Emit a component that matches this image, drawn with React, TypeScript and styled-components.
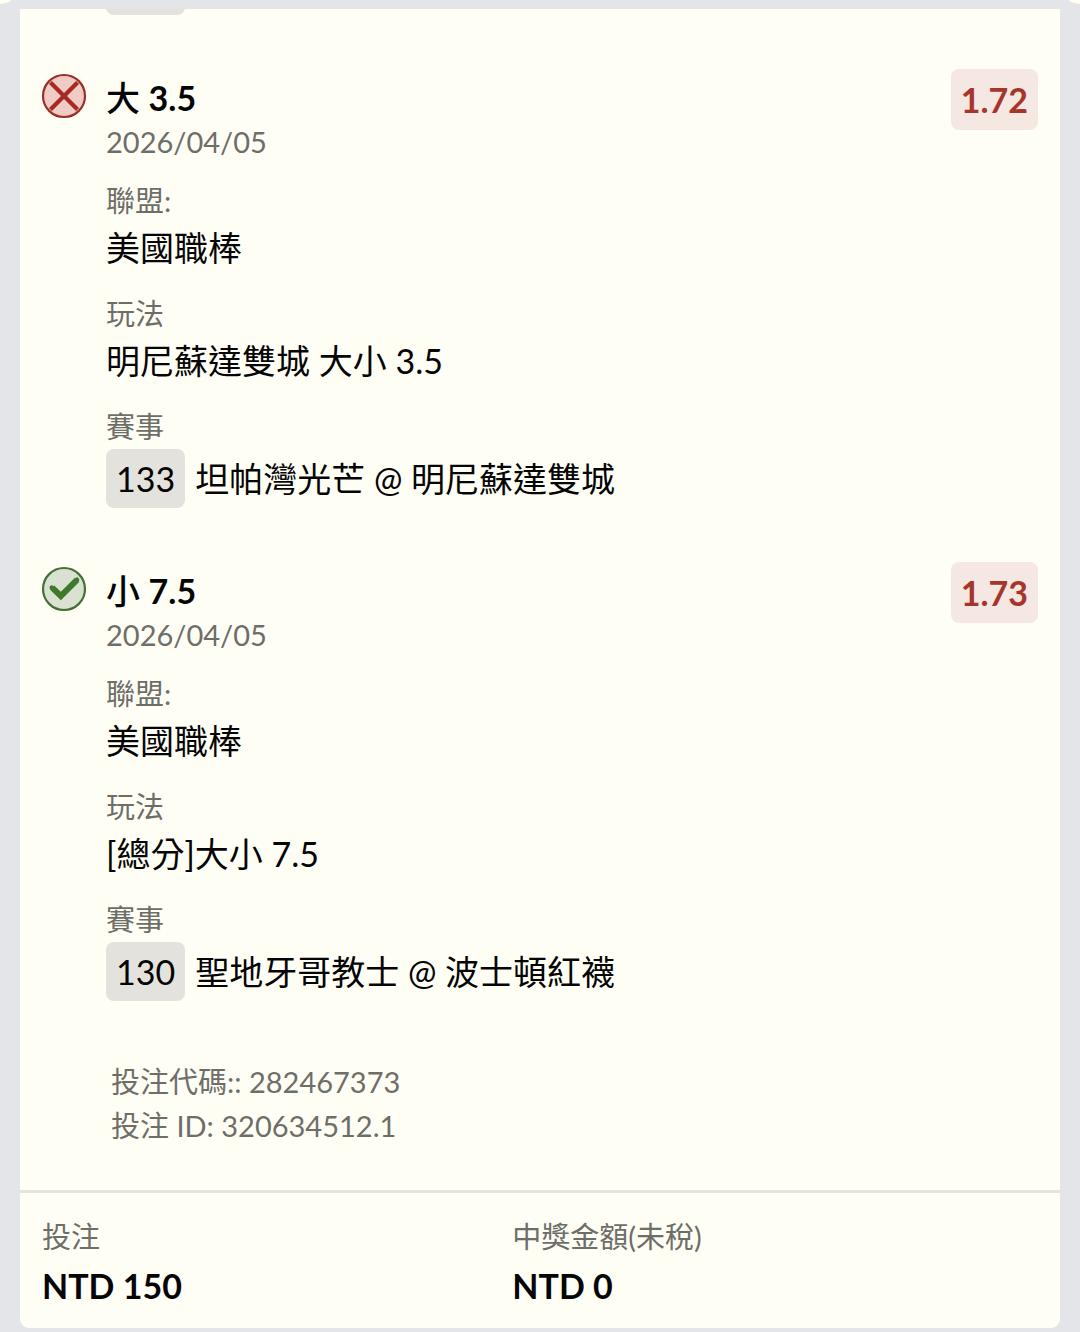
import React from "react";
import styled, { createGlobalStyle } from "styled-components";

const GlobalStyle = createGlobalStyle`
  *, *::before, *::after { box-sizing: border-box; }
  body {
    margin: 0;
    background: #e4e5e9;
    color: #050505;
    font-family: Lato, "Noto Sans CJK TC", sans-serif;
  }
`;

const Page = styled.main`
  position: relative;
  overflow: hidden;
  min-height: 100vh;
  padding: 9px 20px 4px;
`;

const Notch = styled.span<{ $side: "left" | "right" }>`
  position: absolute;
  top: -34px;
  ${(p) => p.$side}: -19px;
  width: 38px;
  height: 38px;
  border-radius: 50%;
  background: #fffef5;
`;

const Ticket = styled.section`
  background: #fffef5;
  border-radius: 0 0 9px 9px;
  overflow: hidden;
`;

const Selections = styled.div`
  display: flex;
  flex-direction: column;
  gap: 54px;
  padding: 0 22px;
`;

const ScrolledRow = styled.div`
  display: flex;
  align-items: flex-end;
  height: 6px;
  padding-left: 64px;
  overflow: hidden;
`;

const Tag = styled.span`
  flex: none;
  min-width: 79px;
  height: 59px;
  padding: 0 10px;
  border-radius: 8px;
  background: #e3e2dc;
  font-size: 34px;
  line-height: 60px;
  text-align: center;
`;

const Selection = styled.article`
  display: flex;
  align-items: flex-start;
  gap: 20px;
`;

const StatusIcon = styled.svg`
  flex: none;
  width: 46px;
  height: 46px;
  margin: 4px -1px 0;
`;

const Body = styled.div`
  flex: 1;
  padding-top: 5px;
`;

const Title = styled.h2`
  margin: 0;
  font-size: 34px;
  line-height: 48px;
  font-weight: 500;
`;

const Line = styled.span`
  font-weight: 700;
`;

const Muted = styled.p`
  margin: 0;
  color: #6e6e69;
  font-size: 29px;
  line-height: 40px;
`;

const Fields = styled.dl`
  display: flex;
  flex-direction: column;
  gap: 19px;
  margin: 19px 0 0;
`;

const Label = styled.dt`
  color: #6e6e69;
  font-size: 29px;
  line-height: 40px;
`;

const Value = styled.dd`
  margin: 0;
  font-size: 34px;
  line-height: 54px;
`;

const MatchValue = styled(Value)`
  display: flex;
  align-items: center;
  gap: 10px;
  padding-top: 2px;
`;

const Odds = styled.strong`
  flex: none;
  min-width: 87px;
  height: 61px;
  padding: 0 10px;
  border-radius: 8px;
  background: #f5e7e1;
  color: #a6352b;
  font-size: 34px;
  line-height: 61px;
  font-weight: 700;
  text-align: center;
`;

const Codes = styled.div`
  padding: 59px 22px 42px 91px;
`;

const CodeLine = styled(Muted)`
  line-height: 44px;
`;

const Totals = styled.dl`
  display: grid;
  grid-template-columns: 17fr 19fr;
  margin: 0;
  padding: 24px 22px 15px;
  border-top: 3px solid #e4e4de;
`;

const Amount = styled(Value)`
  padding-top: 2px;
  font-weight: 700;
`;

type Pick = {
  won: boolean;
  side: string;
  line: string;
  date: string;
  league: string;
  play: string;
  code: string;
  match: string;
  odds: string;
};

const picks: Pick[] = [
  {
    won: false,
    side: "大",
    line: "3.5",
    date: "2026/04/05",
    league: "美國職棒",
    play: "明尼蘇達雙城 大小 3.5",
    code: "133",
    match: "坦帕灣光芒 @ 明尼蘇達雙城",
    odds: "1.72",
  },
  {
    won: true,
    side: "小",
    line: "7.5",
    date: "2026/04/05",
    league: "美國職棒",
    play: "[總分]大小 7.5",
    code: "130",
    match: "聖地牙哥教士 @ 波士頓紅襪",
    odds: "1.73",
  },
];

function Status({ won }: { won: boolean }) {
  return won ? (
    <StatusIcon viewBox="0 0 46 46" fill="none" aria-hidden="true">
      <circle cx="23" cy="23" r="21" fill="#d9e1d0" stroke="#467038" strokeWidth="2.2" />
      <path d="M11.2 21.6 L19.8 30 L36 13.8" stroke="#3f7a2c" strokeWidth="6" />
      <path d="M10.8 21.6 L19.8 29.6 L36 13.8" stroke="#3f7a2c" strokeWidth="4.6" strokeLinecap="round" />
    </StatusIcon>
  ) : (
    <StatusIcon viewBox="0 0 46 46" fill="none" aria-hidden="true">
      <circle cx="23" cy="23" r="21" fill="#efcbc3" stroke="#9c2d2b" strokeWidth="2.2" />
      <path d="M9.5 9.5 L36.5 36.5 M36.5 9.5 L9.5 36.5" stroke="#a52a20" strokeWidth="4.2" />
    </StatusIcon>
  );
}

function PickRow({ pick }: { pick: Pick }) {
  return (
    <Selection>
      <Status won={pick.won} />
      <Body>
        <Title>
          {pick.side} <Line>{pick.line}</Line>
        </Title>
        <Muted>{pick.date}</Muted>
        <Fields>
          <div>
            <Label>聯盟:</Label>
            <Value>{pick.league}</Value>
          </div>
          <div>
            <Label>玩法</Label>
            <Value>{pick.play}</Value>
          </div>
          <div>
            <Label>賽事</Label>
            <MatchValue>
              <Tag>{pick.code}</Tag>
              <span>{pick.match}</span>
            </MatchValue>
          </div>
        </Fields>
      </Body>
      <Odds>{pick.odds}</Odds>
    </Selection>
  );
}

export default function App() {
  return (
    <>
      <GlobalStyle />
      <Page>
        <Notch $side="left" />
        <Notch $side="right" />
        <Ticket>
          <Selections>
            <ScrolledRow>
              <Tag />
            </ScrolledRow>
            {picks.map((pick) => (
              <PickRow key={pick.code} pick={pick} />
            ))}
          </Selections>
          <Codes>
            <CodeLine>投注代碼:: 282467373</CodeLine>
            <CodeLine>投注 ID: 320634512.1</CodeLine>
          </Codes>
          <Totals>
            <div>
              <Label>投注</Label>
              <Amount>NTD 150</Amount>
            </div>
            <div>
              <Label>中獎金額(未稅)</Label>
              <Amount>NTD 0</Amount>
            </div>
          </Totals>
        </Ticket>
      </Page>
    </>
  );
}
